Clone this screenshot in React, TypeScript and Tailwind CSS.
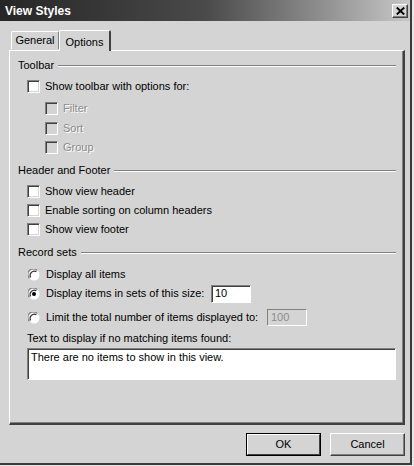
import React from "react";

function Check({ disabled = false }: { disabled?: boolean }) {
  return (
    <div
      className={`w-[13px] h-[13px] shrink-0 border border-t-[#808080] border-l-[#808080] border-r-white border-b-white shadow-[inset_1px_1px_0_#404040,inset_-1px_-1px_0_#d4d4d4] ${
        disabled ? "bg-[#d4d4d4]" : "bg-white"
      }`}
    />
  );
}

function Radio({ checked = false }: { checked?: boolean }) {
  return (
    <svg width="12" height="12" viewBox="0 0 12 12" className="shrink-0">
      <circle cx="6" cy="6" r="5.5" fill="#ffffff" />
      <path d="M1.4 9.2 A5.5 5.5 0 0 1 9.2 1.4" stroke="#808080" strokeWidth="1.2" fill="none" />
      <path d="M2.6 8.4 A4.3 4.3 0 0 1 8.4 2.6" stroke="#303030" strokeWidth="1.2" fill="none" />
      {checked && <circle cx="6" cy="6" r="2" fill="#000" />}
    </svg>
  );
}

function Heading({ label }: { label: string }) {
  return (
    <div className="h-[19px] flex items-center pl-[8px] pr-[7px]">
      <span>{label}</span>
      <div className="flex-1 ml-[4px] h-[2px] border-t border-[#808080] border-b border-b-white" />
    </div>
  );
}

function CheckRow({ label, indent, disabled = false, className = "" }: { label: string; indent: string; disabled?: boolean; className?: string }) {
  return (
    <div className={`h-[19px] flex items-center gap-[5px] ${indent} ${className}`}>
      <Check disabled={disabled} />
      <span className={disabled ? "text-[#8c8c8c] [text-shadow:1px_1px_0_#ffffff]" : ""}>{label}</span>
    </div>
  );
}

export default function App() {
  return (
    <div className="w-[414px] h-[466px] bg-[#e6e6e6] font-['Liberation_Sans',Arial,sans-serif] text-[11px] text-black">
      <div className="w-[412px] h-[465px] bg-[#d4d4d4] border-r-2 border-b-2 border-[#3a3a3a] flex flex-col">
        {/* title bar */}
        <div className="h-[21px] shrink-0 flex items-center justify-between pl-[5px] pr-[2px] bg-gradient-to-r from-[#262626] via-[#4a4a4a] to-[#c8c8c8]">
          <span className="text-white font-bold text-[12px]">View Styles</span>
          <div className="w-[16px] h-[14px] bg-[#d4d4d4] border border-t-white border-l-white border-r-[#404040] border-b-[#404040] shadow-[inset_-1px_-1px_0_#808080] flex items-center justify-center">
            <svg width="9" height="8" viewBox="0 0 9 8">
              <path d="M0.8 0.6 L8.2 7.4 M8.2 0.6 L0.8 7.4" stroke="#000" strokeWidth="2" />
            </svg>
          </div>
        </div>

        {/* tabs */}
        <div className="flex items-end ml-[11px] mt-[8px] h-[21px] relative z-10">
          <div className="h-[18px] w-[48px] flex items-center justify-center border-t border-l border-white border-r border-r-[#808080] rounded-t-[2px] mb-px">
            General
          </div>
          <div className="h-[21px] w-[52px] flex items-start pt-[3px] justify-center bg-[#d4d4d4] border-t border-l border-white border-r-2 border-r-[#404040] rounded-t-[2px] -mb-px">
            Options
          </div>
        </div>

        {/* panel */}
        <div className="ml-[9px] w-[396px] h-[375px] border-t border-l border-white border-r-2 border-b-2 border-r-[#404040] border-b-[#404040] shadow-[inset_-1px_-1px_0_#808080] flex flex-col">
          <div className="pt-[5px]">
            <Heading label="Toolbar" />
          </div>
          <CheckRow label="Show toolbar with options for:" indent="pl-[17px]" className="mt-[2px]" />
          <CheckRow label="Filter" indent="pl-[35px]" disabled className="mt-[3px]" />
          <CheckRow label="Sort" indent="pl-[35px]" disabled className="mt-[1px]" />
          <CheckRow label="Group" indent="pl-[35px]" disabled />

          <div className="mt-[4px]">
            <Heading label="Header and Footer" />
          </div>
          <CheckRow label="Show view header" indent="pl-[17px]" className="mt-[2px]" />
          <CheckRow label="Enable sorting on column headers" indent="pl-[17px]" />
          <CheckRow label="Show view footer" indent="pl-[17px]" />

          <div className="mt-[4px]">
            <Heading label="Record sets" />
          </div>
          <div className="h-[19px] mt-[3px] flex items-center gap-[6px] pl-[18px]">
            <Radio />
            <span>Display all items</span>
          </div>
          <div className="h-[19px] flex items-center gap-[6px] pl-[18px]">
            <Radio checked />
            <span className="w-[159px]">Display items in sets of this size:</span>
            <div className="w-[40px] h-[18px] bg-white border border-t-[#808080] border-l-[#808080] border-r-white border-b-white shadow-[inset_1px_1px_0_#404040] flex items-center pl-[3px]">
              10
            </div>
          </div>
          <div className="h-[19px] mt-[5px] flex items-center gap-[6px] pl-[18px]">
            <Radio />
            <span className="w-[215px]">Limit the total number of items displayed to:</span>
            <div className="w-[40px] h-[17px] bg-[#d4d4d4] border border-t-[#808080] border-l-[#808080] border-r-white border-b-white flex items-center pl-[3px] text-[#8c8c8c]">
              100
            </div>
          </div>
          <div className="h-[19px] mt-[2px] flex items-center pl-[17px]">Text to display if no matching items found:</div>
          <div className="ml-[17px] mr-[7px] h-[32px] bg-white border border-t-[#808080] border-l-[#808080] border-r-white border-b-white shadow-[inset_1px_1px_0_#404040] pl-[3px]">
            There are no items to show in this view.
          </div>
        </div>

        {/* buttons */}
        <div className="flex justify-end gap-[9px] mt-[8px] pr-[5px]">
          <div className="w-[75px] h-[23px] border border-black flex">
            <div className="flex-1 flex items-center justify-center border border-t-white border-l-white border-r-[#404040] border-b-[#404040]">
              OK
            </div>
          </div>
          <div className="w-[75px] h-[23px] flex items-center justify-center border border-t-white border-l-white border-r-[#404040] border-b-[#404040] shadow-[inset_-1px_-1px_0_#808080]">
            Cancel
          </div>
        </div>
      </div>
    </div>
  );
}
